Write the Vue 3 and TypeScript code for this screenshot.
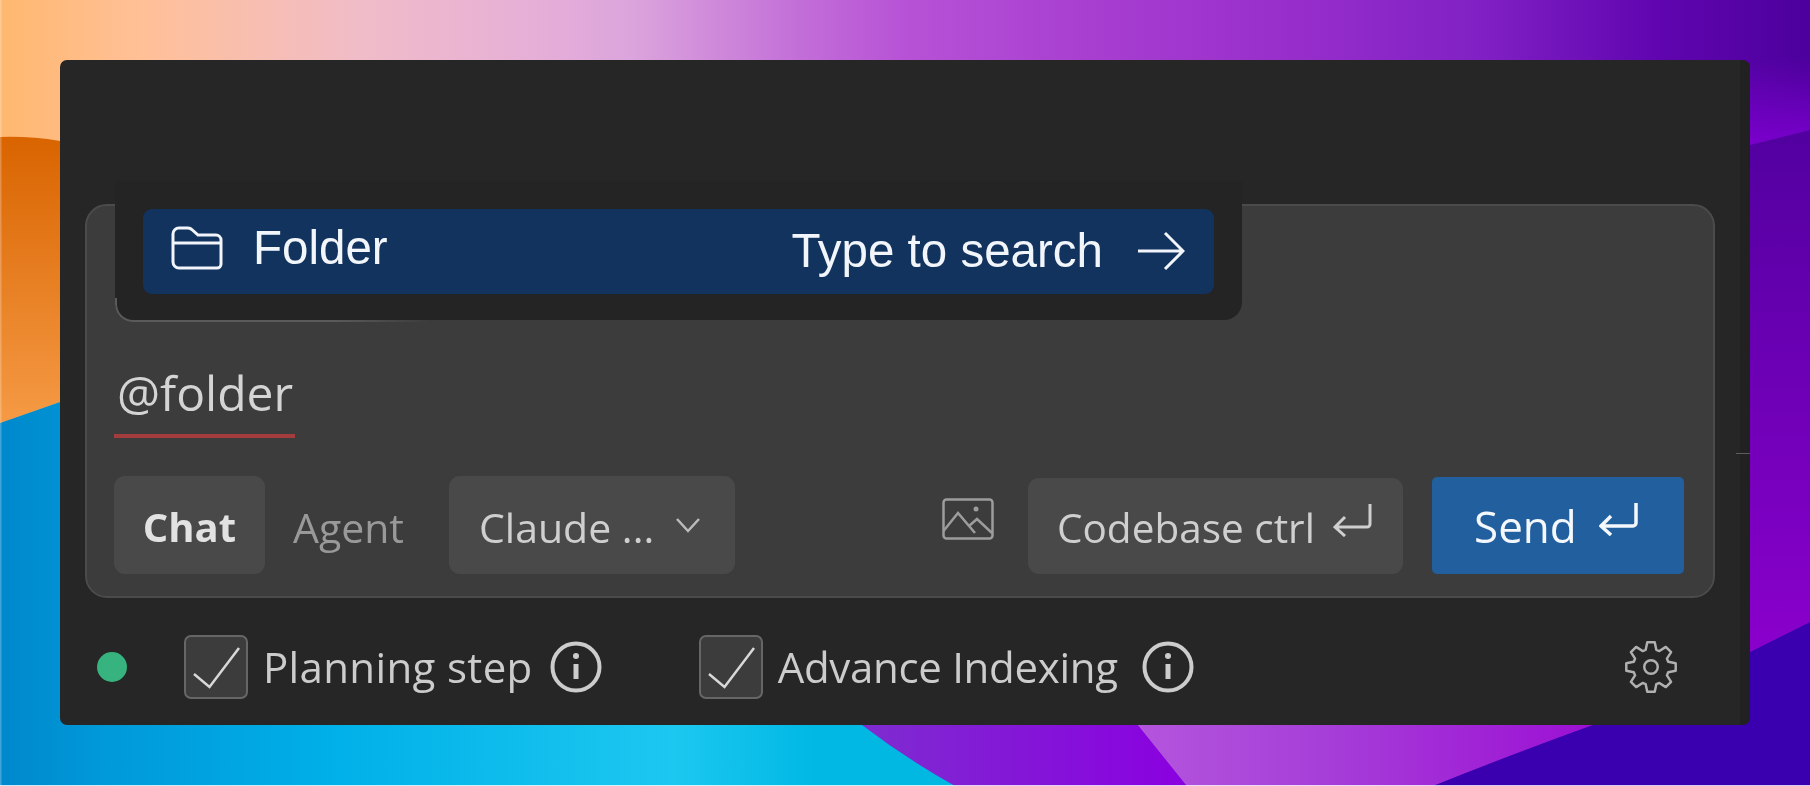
<template>
  <div class="page">
    <svg class="wallpaper" width="1810" height="786" viewBox="0 0 1810 786" preserveAspectRatio="none">
      <defs>
        <linearGradient id="sky" x1="0" y1="0" x2="1" y2="0">
          <stop offset="0" stop-color="#ffb86f" />
          <stop offset="0.08" stop-color="#ffc098" />
          <stop offset="0.2" stop-color="#f0bcc8" />
          <stop offset="0.3" stop-color="#e5aed8" />
          <stop offset="0.35" stop-color="#dba4dc" />
          <stop offset="0.44" stop-color="#c36fd8" />
          <stop offset="0.5" stop-color="#b752d6" />
          <stop offset="0.6" stop-color="#a83fd0" />
          <stop offset="0.7" stop-color="#9a30cc" />
          <stop offset="0.82" stop-color="#8020c4" />
          <stop offset="0.915" stop-color="#6005b0" />
          <stop offset="1" stop-color="#4c009c" />
        </linearGradient>
        <linearGradient id="sky-glow" x1="0" y1="0" x2="0" y2="1">
          <stop offset="0" stop-color="#7a00cc" stop-opacity="0" />
          <stop offset="1" stop-color="#7a00cc" />
        </linearGradient>
        <linearGradient id="orange" x1="0" y1="0" x2="0" y2="1">
          <stop offset="0" stop-color="#d96400" />
          <stop offset="1" stop-color="#f59a45" />
        </linearGradient>
        <linearGradient id="sea" x1="0" y1="0" x2="1" y2="0">
          <stop offset="0" stop-color="#0088cc" />
          <stop offset="0.1" stop-color="#0098d8" />
          <stop offset="0.35" stop-color="#00b0e8" />
          <stop offset="0.7" stop-color="#1cc8f0" />
          <stop offset="0.85" stop-color="#00b8e4" />
          <stop offset="1" stop-color="#00b8e0" />
        </linearGradient>
        <linearGradient id="violet" x1="0" y1="0" x2="1" y2="0">
          <stop offset="0" stop-color="#7e2ccf" />
          <stop offset="1" stop-color="#8a00e0" />
        </linearGradient>
        <linearGradient id="petal" x1="0" y1="0" x2="1" y2="0">
          <stop offset="0" stop-color="#b455dd" />
          <stop offset="0.4" stop-color="#a63fd8" />
          <stop offset="1" stop-color="#9c10d4" />
        </linearGradient>
        <linearGradient id="side" x1="0" y1="0" x2="0" y2="1">
          <stop offset="0" stop-color="#5200a0" />
          <stop offset="1" stop-color="#8a00cc" />
        </linearGradient>
      </defs>
      <rect width="1810" height="786" fill="url(#sky)" />
      <rect x="1750" y="60" width="60" height="85" fill="url(#sky-glow)" />
      <path d="M0 137 Q30 136 60 141 L60 402 L0 423 Z" fill="url(#orange)" />
      <path d="M0 423 L60 402 L900 402 L960 786 L0 786 Z" fill="url(#sea)" />
      <path d="M862 725 Q905 758 955 786 L1187 786 L1138 725 Z" fill="url(#violet)" />
      <path d="M1138 725 L1593 725 Q1510 755 1433 786 L1187 786 Z" fill="url(#petal)" />
      <path d="M1593 725 L1810 622 L1810 786 L1433 786 Q1510 755 1593 725 Z" fill="#3a00b0" />
      <path d="M1750 145 L1810 130 L1810 622 L1750 652 Z" fill="url(#side)" />
      <rect width="1.5" height="786" fill="#fff" opacity="0.25" />
      <rect y="785" width="1810" height="1" fill="#fff" opacity="0.8" />
    </svg>

    <div class="panel">
      <div class="composer">
        <div class="mention-menu">
          <div class="mention-row">
            <svg class="folder-icon" viewBox="0 0 52 44" fill="none" stroke="currentColor" stroke-width="3">
              <path d="M2 36V8a6 6 0 0 1 6-6h9c2 0 3 .6 4.4 2L27 9h18a5 5 0 0 1 5 5v24a4 4 0 0 1-4 4H8a6 6 0 0 1-6-6Z" />
              <path d="M2 17h48" />
            </svg>
            <span class="row-label">Folder</span>
            <span class="row-hint">Type to search</span>
            <svg class="arrow-icon" viewBox="0 0 48 40" fill="none" stroke="currentColor" stroke-width="3">
              <path d="M1 20h45M28 2l18 18-18 18" />
            </svg>
          </div>
        </div>

        <div class="input-line"><span class="mention">@folder</span></div>

        <div class="toolbar">
          <button class="tool active">Chat</button>
          <button class="tool plain">Agent</button>
          <button class="tool model">
            Claude ...
            <svg class="chevron" viewBox="0 0 26 16" fill="none" stroke="currentColor" stroke-width="2.5">
              <path d="M2 2l11 12L24 2" />
            </svg>
          </button>
          <svg class="image-icon" viewBox="0 0 52 42" fill="none" stroke="currentColor" stroke-width="2.5">
            <rect x="1.5" y="1.5" width="49" height="39" rx="3" />
            <path d="M1.5 33 16 15l17 20M27 28l8-7 15 14" />
            <circle cx="34" cy="11" r="2.5" fill="currentColor" stroke="none" />
          </svg>
          <button class="tool codebase">
            Codebase ctrl
            <svg class="return-icon" viewBox="0 0 40 34" fill="none" stroke="currentColor" stroke-width="3">
              <path d="M37 1v20a3 3 0 0 1-3 3H2M12 14 2 24l10 9" />
            </svg>
          </button>
          <button class="send">
            Send
            <svg class="return-icon" viewBox="0 0 40 34" fill="none" stroke="currentColor" stroke-width="3.5">
              <path d="M37 1v20a3 3 0 0 1-3 3H2M12 14 2 24l10 9" />
            </svg>
          </button>
        </div>
      </div>

      <div class="status-bar">
        <span class="dot"></span>
        <label v-for="opt in options" :key="opt" class="option">
          <span class="box">
            <svg viewBox="0 0 60 60" fill="none" stroke="currentColor" stroke-width="2.5">
              <path d="M8 37l15.5 13L53 11" />
            </svg>
          </span>
          <span class="option-label">{{ opt }}</span>
          <svg class="info-icon" viewBox="0 0 52 52" fill="none" stroke="currentColor" stroke-width="4">
            <circle cx="26" cy="26" r="23.5" />
            <path d="M26 23v15" stroke-width="5" />
            <circle cx="26" cy="15" r="3" fill="currentColor" stroke="none" />
          </svg>
        </label>
        <svg class="gear-icon" viewBox="0 0 24 24" fill="none" stroke="currentColor" stroke-width="1.1" stroke-linejoin="round">
          <circle cx="12" cy="12" r="3" />
          <path :d="gearPath" />
        </svg>
      </div>
    </div>
  </div>
</template>

<script setup lang="ts">
const options: string[] = ['Planning step', 'Advance Indexing']

// 8 rounded teeth, outer and inner radius in the 24 unit viewBox
function buildGear(outer: number, inner: number): string {
  const pts: string[] = []
  for (let i = 0; i < 8; i++) {
    const a = (i * Math.PI) / 4 - Math.PI / 2
    const offsets: [number, number][] = [
      [-0.3, inner],
      [-0.15, outer],
      [0.15, outer],
      [0.3, inner],
    ]
    for (const [da, r] of offsets) {
      pts.push(`${(12 + r * Math.cos(a + da)).toFixed(2)} ${(12 + r * Math.sin(a + da)).toFixed(2)}`)
    }
  }
  return `M${pts.join('L')}Z`
}

const gearPath = buildGear(11.1, 8)
</script>

<style>
html,
body {
  margin: 0;
  background: #00b8e4;
}
</style>

<style scoped>
.page {
  position: relative;
  width: 1810px;
  height: 786px;
  overflow: hidden;
  padding: 60px 60px 61px;
  box-sizing: border-box;
  font-family: "Open Sans", "Noto Sans", sans-serif;
}

.wallpaper {
  position: absolute;
  inset: 0;
}

.panel {
  position: relative;
  height: 665px;
  box-sizing: border-box;
  padding: 144px 25px 0 25px;
  background: #262626;
  border-radius: 7px;
  border-right: 10px solid #212121;
  display: flex;
  flex-direction: column;
}

/* stray tick on the right edge of the panel */
.panel::after {
  content: "";
  position: absolute;
  right: -10px;
  top: 393px;
  width: 14px;
  height: 1px;
  background: #5c5c5c;
}

.composer {
  position: relative;
  height: 394px;
  box-sizing: border-box;
  border: 2px solid #4b4b4b;
  border-radius: 22px;
  background: #3c3c3c;
  padding: 0 29px 22px 27px;
  display: flex;
  flex-direction: column;
  justify-content: flex-end;
  filter: blur(0.4px);
}

.mention-menu {
  position: absolute;
  left: 28px;
  top: -25px;
  width: 1127px;
  height: 139px;
  box-sizing: border-box;
  padding: 28px;
  background: #242424;
  border-radius: 0 0 18px 18px;
}

.mention-menu::after {
  content: "";
  position: absolute;
  left: 0;
  bottom: -2px;
  width: 316px;
  height: 24px;
  box-sizing: border-box;
  border-left: 2px solid #5a5a5a;
  border-bottom: 2px solid #5a5a5a;
  border-bottom-left-radius: 18px;
  mask-image: linear-gradient(to right, #000 70%, transparent);
}

.mention-row {
  height: 85px;
  display: flex;
  align-items: center;
  padding: 0 29px 0 28px;
  background: #12335e;
  border-radius: 9px;
  color: #f2f6fb;
  font-family: "Liberation Sans", Arial, sans-serif;
  font-size: 47.5px;
}

.folder-icon {
  width: 52px;
  height: 44px;
  margin: 0 30px 7px 0;
}

.row-label {
  margin-bottom: 9px;
}

.row-hint {
  margin: 0 0 2px auto;
}

.arrow-icon {
  width: 48px;
  height: 40px;
  margin: 0 0 2px 34px;
}

.input-line {
  margin-bottom: 38px;
  line-height: 60px;
}

.mention {
  display: inline-block;
  font-size: 48px;
  color: #d4d4d4;
  padding: 0 2px 11px 3px;
  border-bottom: 4px solid #a33c3c;
}

.toolbar {
  display: flex;
  align-items: center;
  height: 98px;
  font-size: 41px;
}

.tool {
  height: 98px;
  border: 0;
  border-radius: 11px;
  background: #494949;
  color: #cfcfcf;
  font: inherit;
  padding: 3px 30px 0;
  box-sizing: border-box;
  display: flex;
  align-items: center;
}

.tool.active {
  width: 151px;
  padding: 3px 0 0;
  justify-content: center;
  font-weight: 700;
  font-size: 40px;
  color: #e2e2e2;
}

.tool.plain {
  background: none;
  color: #999;
  width: 184px;
  padding: 3px 28px 0;
}

.tool.model {
  width: 286px;
  padding-right: 34px;
  justify-content: space-between;
}

.chevron {
  width: 26px;
  height: 16px;
  margin-top: -3px;
  color: #bbb;
}

.image-icon {
  width: 52px;
  height: 42px;
  color: #9c9c9c;
  margin: -12px 34px 0 auto;
}

.tool.codebase {
  width: 375px;
  height: 96px;
  align-self: flex-end;
  gap: 18px;
  padding: 2px 29px 0;
  font-size: 40.5px;
  white-space: nowrap;
}

.return-icon {
  flex: none;
  width: 40px;
  height: 34px;
  margin-top: -14px;
}

.send {
  width: 252px;
  height: 97px;
  align-self: flex-end;
  margin-left: 29px;
  border: 0;
  border-radius: 5px;
  background: #225f9f;
  color: #f4f8fc;
  font: inherit;
  font-size: 44px;
  display: flex;
  align-items: center;
  gap: 22px;
  padding: 0 42px;
  box-sizing: border-box;
}

.status-bar {
  flex: 1;
  display: flex;
  align-items: center;
  padding: 10px 37px 0 12px;
  color: #cccccc;
  font-size: 42px;
  filter: blur(0.4px);
}

.dot {
  width: 30px;
  height: 30px;
  border-radius: 50%;
  background: #37b37f;
  margin-right: 57px;
}

.option {
  display: flex;
  align-items: center;
  margin-right: 97px;
}

.option:first-of-type .option-label {
  letter-spacing: 0.35px;
}

.option:first-of-type .info-icon {
  margin-left: 17px;
}

.option:last-of-type .option-label {
  letter-spacing: -0.3px;
}

.box {
  width: 64px;
  height: 64px;
  box-sizing: border-box;
  border: 2px solid #666;
  border-radius: 7px;
  background: #3c3c3c;
  color: #d8d8d8;
  margin-right: 15px;
}

.box svg {
  display: block;
  width: 100%;
  height: 100%;
}

.info-icon {
  width: 52px;
  height: 52px;
  margin-left: 24px;
}

.gear-icon {
  width: 54px;
  height: 54px;
  margin-left: auto;
  color: #b0b0b0;
}
</style>
